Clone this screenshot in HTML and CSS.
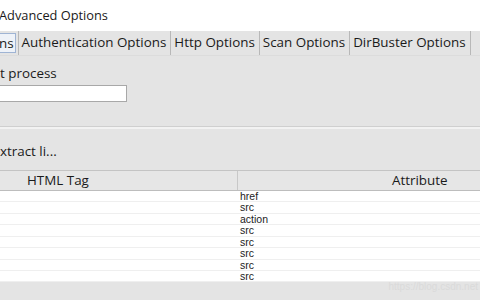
FILE: index.html
```html
<!DOCTYPE html>
<html>
<head>
<meta charset="utf-8">
<link rel="stylesheet" href="styles.css">
</head>
<body>
<div class="window">
  <div class="title">Advanced Options</div>
  <div class="tabs">
    <div class="tab selected">ns</div>
    <div class="tab">Authentication Options</div>
    <div class="tab">Http Options</div>
    <div class="tab">Scan Options</div>
    <div class="tab">DirBuster Options</div>
  </div>
  <div class="panel">
    <div class="label first">t process</div>
    <div class="input"></div>
    <div class="sep"></div>
    <div class="label second">xtract li...</div>
    <div class="table">
      <div class="thead">
        <div class="th left">HTML Tag</div>
        <div class="th right">Attribute</div>
      </div>
      <div class="row"><div class="c1"></div><div class="c2">href</div></div>
      <div class="row"><div class="c1"></div><div class="c2">src</div></div>
      <div class="row"><div class="c1"></div><div class="c2">action</div></div>
      <div class="row"><div class="c1"></div><div class="c2">src</div></div>
      <div class="row"><div class="c1"></div><div class="c2">src</div></div>
      <div class="row"><div class="c1"></div><div class="c2">src</div></div>
      <div class="row"><div class="c1"></div><div class="c2">src</div></div>
      <div class="row"><div class="c1"></div><div class="c2">src</div></div>
    </div>
    <div class="watermark">https://blog.csdn.net</div>
  </div>
</div>
</body>
</html>
```

FILE: styles.css
```css
html, body {
  margin: 0;
  padding: 0;
}
body {
  width: 480px;
  height: 300px;
  overflow: hidden;
  background: #e4e4e4;
  font-family: "Open Sans", "Noto Sans", sans-serif;
  color: #1a1a1a;
}
.window {
  display: flex;
  flex-direction: column;
  height: 300px;
}
.title {
  height: 31px;
  background: #ffffff;
  font-size: 12.8px;
  line-height: 30px;
  margin-left: -1px;
}
.tabs {
  display: flex;
  height: 24px;
  align-items: stretch;
  background: #e4e4e4;
  font-size: 13.4px;
  border-bottom: 1px solid #dcdcdc;
}
.tab {
  padding: 0 4px 0 3px;
  line-height: 23px;
  border-right: 1px solid #b8b8b8;
  white-space: nowrap;
}
.tab.selected + .tab {
  border-left: 1px solid #b8b8b8;
}
.tab.selected {
  padding: 0 1px 0 0;
  margin: 2px 2px 2px -1px;
  line-height: 19px;
  border: 1px solid #9fb4d4;
  border-left: none;
  background: #eef2f8;
}
.panel {
  position: relative;
  flex: 1;
  display: flex;
  flex-direction: column;
}
.label {
  font-size: 13.4px;
  line-height: 18px;
}
.label.first {
  margin-top: 8px;
}
.input {
  width: 126px;
  height: 15px;
  margin-top: 3px;
  background: #ffffff;
  border: 1px solid #a8a8a8;
  border-left: none;
}
.sep {
  margin-top: 24px;
  height: 1px;
  background: #cfcfcf;
  border-bottom: 2px solid #f2f2f2;
}
.label.second {
  margin-top: 13px;
}
.table {
  margin-top: 10px;
  width: 480px;
  display: flex;
  flex-direction: column;
}
.thead {
  display: flex;
  height: 19px;
  border-top: 1px solid #c4c4c4;
  border-bottom: 1px solid #bdbdbd;
  background: #e6e6e6;
  font-size: 13.4px;
  line-height: 19px;
}
.th.left {
  width: 238px;
  padding-left: 27px;
  box-sizing: border-box;
  border-right: 1px solid #c8c8c8;
}
.th.right {
  flex: 1;
  padding-left: 154px;
}
.row {
  display: flex;
  height: 11.43px;
  box-sizing: border-box;
  background: #ffffff;
  border-bottom: 1px solid #efefef;
  font-family: "Liberation Sans", Arial, sans-serif;
  font-size: 10.5px;
  line-height: 10.5px;
  color: #222;
}
.c1 {
  width: 240px;
}
.c2 {
  flex: 1;
}
.watermark {
  position: absolute;
  right: 2px;
  bottom: 8px;
  font-family: "Liberation Sans", Arial, sans-serif;
  font-size: 10px;
  color: #dadada;
}
```
